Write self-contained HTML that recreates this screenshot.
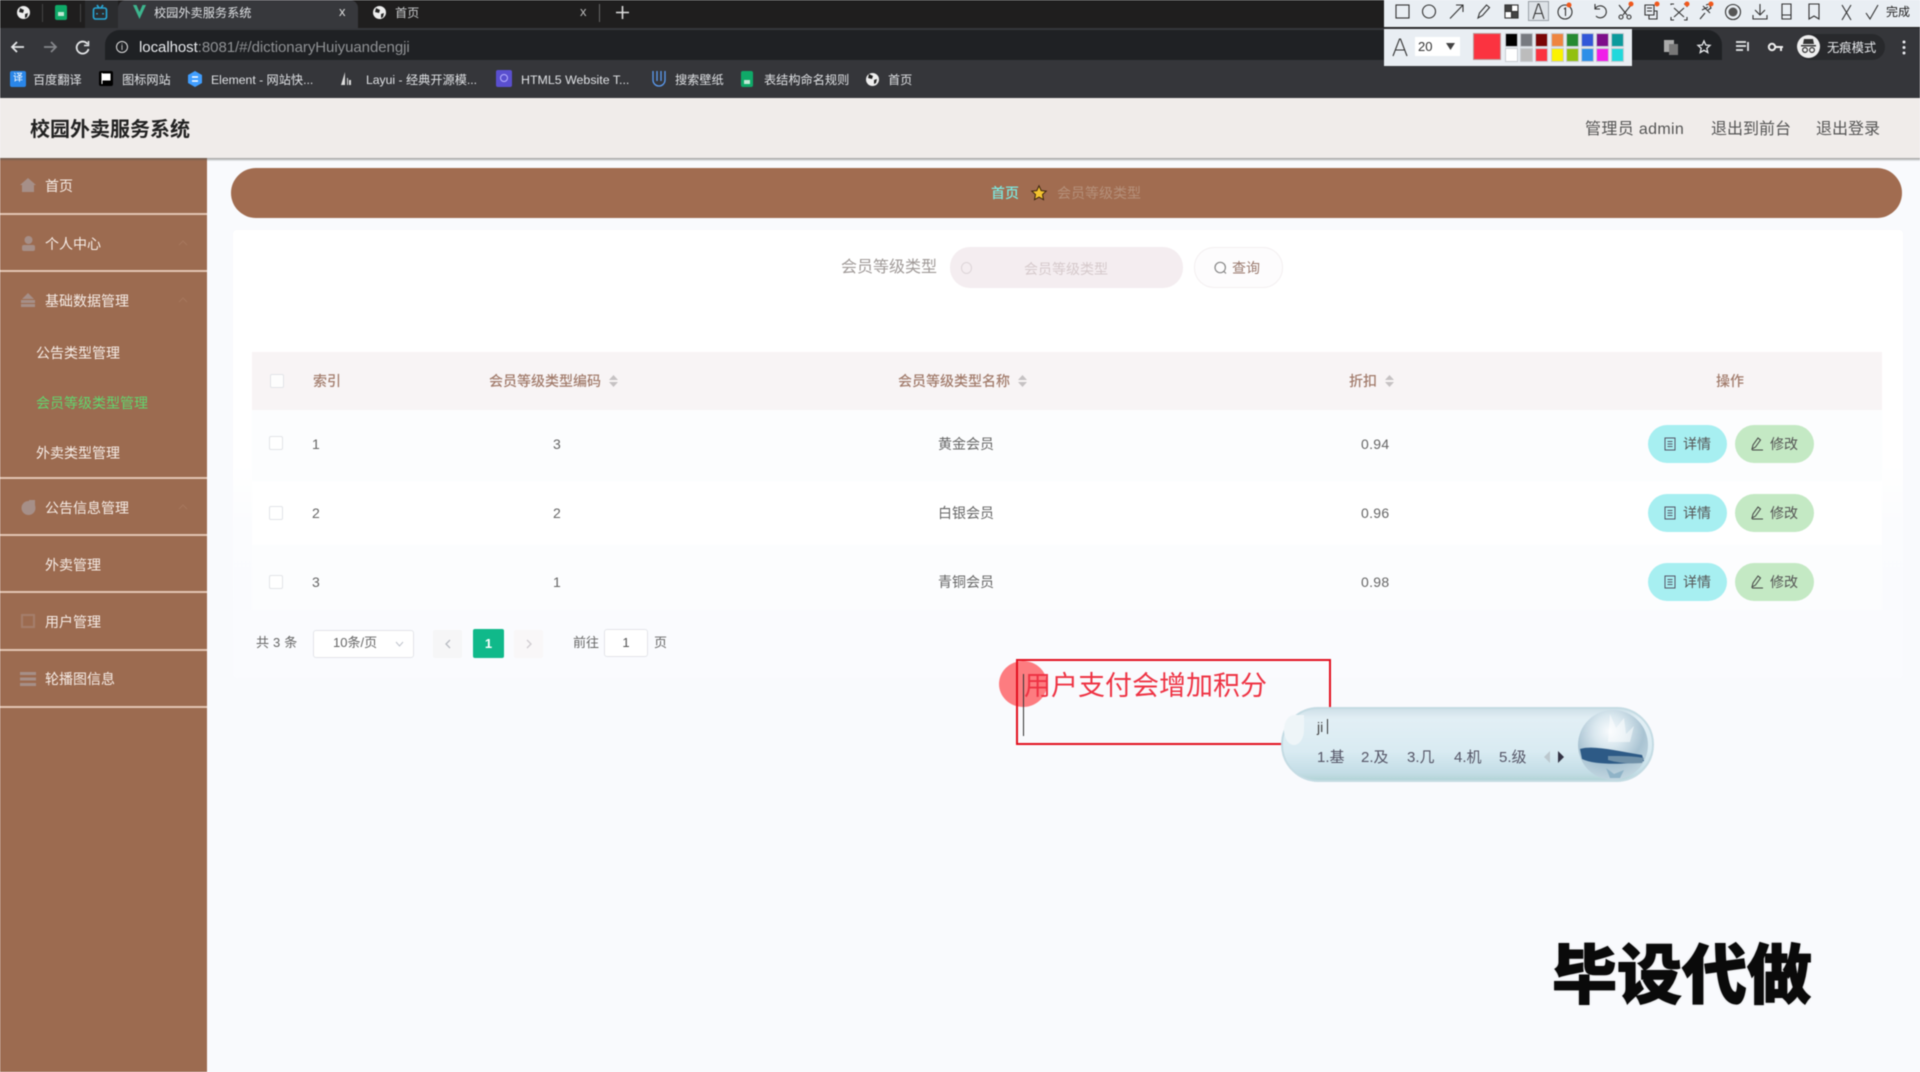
<!DOCTYPE html>
<html lang="zh"><head><meta charset="utf-8"><title>校园外卖服务系统</title>
<style>
html,body{margin:0;padding:0;width:1920px;height:1072px;overflow:hidden;background:#f9fafd}
body{font-family:"Liberation Sans","Noto Sans CJK SC",sans-serif}
#w{position:absolute;left:0;top:0;width:1920px;height:1072px;overflow:hidden;filter:blur(.55px)}
.a{position:absolute}
.t{position:absolute;white-space:nowrap;line-height:20px;height:20px}
.b{position:absolute;box-sizing:border-box}
svg{position:absolute;overflow:visible}
.side{color:#f6ece6;font-size:14px}
.dv{position:absolute;left:0;width:207px;height:1.5px;background:#e2c4b2}
.th{font-size:14px;color:#a27c6c;font-weight:500}
.td{font-size:14px;color:#666}
.bm{font-size:12px;color:#dfe1e4}
.sw{position:absolute;width:13px;height:14px;box-sizing:border-box;border:1px solid #c8ccd2}
.btn{position:absolute;width:79px;height:38px;border-radius:19px;font-size:14px;color:#555;line-height:38px;box-sizing:border-box;padding-left:35px}
.cb{position:absolute;left:269px;width:14px;height:14px;border:1px solid #e2e4e8;background:#fff;border-radius:2px;box-sizing:border-box}
</style></head><body><div id="w">

<!-- browser chrome -->
<div class="a" style="left:0;top:0;width:1920px;height:28px;background:#1f1e1e"></div>
<div class="a" style="left:118px;top:0;width:240px;height:28px;background:#37383c;border-radius:8px 8px 0 0"></div>
<div class="a" style="left:0;top:28px;width:1920px;height:32px;background:#35363a"></div>
<div class="a" style="left:105px;top:30px;width:1617px;height:30px;background:#1f2124;border-radius:15px 15px 0 0"></div>
<div class="a" style="left:0;top:60px;width:1920px;height:38px;background:#35363a"></div>

<!-- tab icons -->
<div class="a" style="left:17px;top:6px;width:13px;height:13px;border-radius:50%;background:#eee"></div>
<svg style="left:17px;top:6px" width="13" height="13"><path d="M3 2l4 2-1 3-4-1zM8 8l3-1-1 4-2 1z" fill="#222"/></svg>
<div class="a" style="left:85px;top:0;width:33px;height:28px;background:#2b2c2e"></div>
<div class="a" style="left:42px;top:4px;width:1px;height:18px;background:#444"></div>
<div class="a" style="left:80px;top:4px;width:1px;height:18px;background:#444"></div>
<div class="a" style="left:55px;top:5px;width:12px;height:15px;background:#0fa968;border-radius:2px"></div>
<div class="a" style="left:58px;top:12px;width:6px;height:4px;background:#bfe8d4"></div>
<svg style="left:92px;top:4px" width="16" height="17" fill="none" stroke="#29a7d6" stroke-width="1.6"><rect x="1.5" y="4" width="13" height="11" rx="2"/><path d="M5 1l2 3M11 1l-2 3M5 9v1.5M11 9v1.5"/></svg>
<svg style="left:132px;top:4px" width="15" height="16"><path d="M1 1l6.500 14L14 1h-3.500L7.500 8 4.500 1z" fill="#3db58e"/></svg>
<div class="t" style="left:154px;top:3px;font-size:12.200px;color:#dfe1e4">校园外卖服务系统</div>
<div class="t" style="left:339px;top:2px;font-size:13px;color:#ddd">x</div>
<div class="a" style="left:373px;top:6px;width:13px;height:13px;border-radius:50%;background:#eee"></div>
<svg style="left:373px;top:6px" width="13" height="13"><path d="M3 2l4 2-1 3-4-1zM8 8l3-1-1 4-2 1z" fill="#222"/></svg>
<div class="t" style="left:395px;top:3px;font-size:12.200px;color:#c8cacc">首页</div>
<div class="t" style="left:580px;top:2px;font-size:13px;color:#bbb">x</div>
<div class="a" style="left:599px;top:4px;width:1px;height:18px;background:#666"></div>
<svg style="left:616px;top:6px" width="13" height="13" stroke="#ddd" stroke-width="1.600"><path d="M6.500 0v13M0 6.500h13"/></svg>

<!-- nav icons -->
<svg style="left:10px;top:40px" width="15" height="14" fill="none" stroke="#e4e6e8" stroke-width="1.800"><path d="M14 7H2M7 2L2 7l5 5"/></svg>
<svg style="left:43px;top:40px" width="15" height="14" fill="none" stroke="#84868a" stroke-width="1.800"><path d="M1 7h12M8 2l5 5-5 5"/></svg>
<svg style="left:75px;top:40px" width="15" height="15" fill="none" stroke="#e4e6e8" stroke-width="1.800"><path d="M12.500 4A6 6 0 1 0 13.500 9"/><path d="M13.500 1v4.500H9" stroke-width="1.500"/></svg>
<div class="a" style="left:116px;top:41px;width:12px;height:12px;border:1.300px solid #ddd;border-radius:50%;box-sizing:border-box;color:#ddd;font-size:9px;line-height:10px;text-align:center">i</div>
<div class="t" style="left:139px;top:38px;font-size:15px;color:#8f9194;letter-spacing:-.05px"><span style="color:#e8eaed">localhost</span>:8081/#/dictionaryHuiyuandengji</div>

<!-- bookmarks -->
<div class="a" style="left:10px;top:71px;width:16px;height:16px;background:#2a86e8;border-radius:2px;color:#fff;font-size:10px;line-height:16px;text-align:center">译</div>
<div class="t bm" style="left:33px;top:70px;font-size:12.200px">百度翻译</div>
<div class="a" style="left:99px;top:71px;width:14px;height:15px;background:#000;border-radius:2px"></div>
<svg style="left:101px;top:73px" width="10" height="11"><path d="M1 0v11M1 1h8v6H1" fill="#fff" stroke="#fff"/></svg>
<div class="t bm" style="left:122px;top:70px;font-size:12.200px">图标网站</div>
<svg style="left:188px;top:71px" width="14" height="16"><path d="M7 0l7 4v8l-7 4-7-4V4z" fill="#409eff"/><path d="M4 6h6M4 10h6" stroke="#fff" stroke-width="1.500"/></svg>
<div class="t bm" style="left:211px;top:70px;font-size:12.200px">Element - 网站快...</div>
<svg style="left:340px;top:72px" width="12" height="14"><path d="M5 0v13H1zM8 6v7H7V6zM11 8v5h-2V8z" fill="#ddd"/></svg>
<div class="t bm" style="left:366px;top:70px;font-size:12.200px">Layui - 经典开源模...</div>
<div class="a" style="left:496px;top:70px;width:16px;height:17px;background:#5a4fcf;border-radius:2px"></div>
<div class="a" style="left:500px;top:74px;width:8px;height:8px;border:1px solid #b7b0ff;border-radius:50%;box-sizing:border-box"></div>
<div class="t bm" style="left:521px;top:70px;font-size:12.400px">HTML5 Website T...</div>
<svg style="left:652px;top:71px" width="14" height="15" fill="none" stroke="#5b9bf0" stroke-width="1.300"><path d="M1 0v9a6 6 0 0 0 12 0V0M5 0v10M9 0v10"/></svg>
<div class="t bm" style="left:675px;top:70px;font-size:12.200px">搜索壁纸</div>
<div class="a" style="left:741px;top:71px;width:12px;height:16px;background:#0fa968;border-radius:2px"></div>
<div class="a" style="left:744px;top:80px;width:6px;height:4px;background:#bfe8d4"></div>
<div class="t bm" style="left:764px;top:70px;font-size:12.200px">表结构命名规则</div>
<div class="a" style="left:866px;top:73px;width:13px;height:13px;border-radius:50%;background:#eee"></div>
<svg style="left:866px;top:72px" width="13" height="13"><path d="M3 2l4 2-1 3-4-1zM8 8l3-1-1 4-2 1z" fill="#222"/></svg>
<div class="t bm" style="left:888px;top:70px;font-size:12.200px">首页</div>

<!-- right chrome -->
<svg style="left:1664px;top:40px" width="14" height="15"><rect x="0" y="0" width="10" height="12" fill="#aaa"/><rect x="5" y="4" width="9" height="11" fill="#777"/></svg>
<svg style="left:1697px;top:40px" width="14" height="14" fill="none" stroke="#e8eaed" stroke-width="1.300"><path d="M7 1l1.800 4 4.200.4-3.200 2.800 1 4.300L7 10.300 3.200 12.500l1-4.300L1 5.400 5.200 5z"/></svg>
<svg style="left:1736px;top:40px" width="15" height="14" stroke="#e8eaed" stroke-width="1.700" fill="none"><path d="M0 2h10M0 6h10M0 10h7M12 2v9"/></svg>
<svg style="left:1768px;top:42px" width="15" height="10"><circle cx="4" cy="5" r="3.200" fill="none" stroke="#eee" stroke-width="2"/><path d="M7 4h8v2h-1v3h-2V6H7z" fill="#eee"/></svg>
<div class="a" style="left:1797px;top:34px;width:88px;height:26px;border-radius:13px;background:#28292c"></div>
<div class="a" style="left:1797px;top:35px;width:23px;height:23px;border-radius:50%;background:#eee"></div>
<svg style="left:1800px;top:39px" width="17" height="15" fill="#333"><path d="M4 0h9l1 5H3z"/><rect x="1" y="6" width="15" height="1.500"/><circle cx="5" cy="11" r="2.400" fill="none" stroke="#333" stroke-width="1.200"/><circle cx="12" cy="11" r="2.400" fill="none" stroke="#333" stroke-width="1.200"/></svg>
<div class="t" style="left:1827px;top:38px;font-size:12.300px;color:#e8eaed">无痕模式</div>
<svg style="left:1902px;top:40px" width="4" height="15" fill="#e8eaed"><circle cx="2" cy="2" r="1.500"/><circle cx="2" cy="7.500" r="1.500"/><circle cx="2" cy="13" r="1.500"/></svg>

<!-- screenshot toolbar -->
<div class="a" style="left:1384px;top:0;width:536px;height:27px;background:#e9eef3"></div>
<div class="a" style="left:1384px;top:29px;width:248px;height:37px;background:#e9eef3"></div>
<div class="a" style="left:1528px;top:1px;width:21px;height:20px;border:1px solid #9aa0a6;background:#dde2e7;box-sizing:border-box"></div>
<svg style="left:1384px;top:0" width="536" height="27" fill="none" stroke="#333" stroke-width="1.100">
<rect x="12" y="5" width="13" height="13"/>
<circle cx="45" cy="11.500" r="6.500"/>
<path d="M66 18.500L79 5M72 5h7v7"/>
<path d="M94 18l1.500-5 7-8 3 2.500-7 8z"/>
<rect x="121" y="5" width="13" height="13" fill="#fff"/><rect x="121" y="5" width="6.500" height="6.500" fill="#444"/><rect x="127.500" y="11.500" width="6.500" height="6.500" fill="#444"/>
<path d="M149 19l5-15h1l5 15M151 13.500h7"/>
<circle cx="181" cy="12" r="7"/><path d="M180 9l1.500-1v8"/>
<path d="M211 9a6 6 0 1 1 1 7M211 4v5h5"/>
<path d="M235 5l8 10M247 5l-8 10"/><circle cx="237" cy="17" r="2"/><circle cx="245" cy="17" r="2"/>
<path d="M261 5h9v10h-9zM263 8h5M263 11h5M265 15v4h8v-8h-3"/>
<path d="M287 5v-1h3M300 4h3v3M287 17v3h3M300 20h3v-3M290 8l10 9M300 8l-10 9"/>
<path d="M316 19l5-6M319 6l7 7M322 5l3-1 2 4-3 2M318 10l6-3"/>
<circle cx="349" cy="12" r="7.500"/><circle cx="349" cy="12" r="4.500" fill="#555" stroke="none"/>
<path d="M376 4v10M371 10l5 5 5-5M369 15v4h14v-4"/>
<path d="M398 4h9v15h-9zM398 15h9"/>
<path d="M425 4h10v15l-5-3-5 3z"/>
<path d="M458 5l9 15M467 5l-9 15"/>
<path d="M482 13l4 6 8-14"/>
</svg>
<svg style="left:1384px;top:0" width="536" height="27" fill="#f0581c"><circle cx="185" cy="5" r="2.500"/><circle cx="247" cy="4" r="2.500"/><circle cx="273" cy="4" r="2.500"/><circle cx="303" cy="4" r="2.500"/><circle cx="327" cy="4" r="2.500"/></svg>
<div class="t" style="left:1886px;top:2px;font-size:12px;color:#222">完成</div>

<svg style="left:1392px;top:38px" width="16" height="19" fill="none" stroke="#333" stroke-width="1.100"><path d="M1 18L7.500 1h1L15 18M3.500 12h9"/></svg>
<div class="a" style="left:1415px;top:37px;width:45px;height:19px;background:#fff"></div>
<div class="t" style="left:1418px;top:37px;font-size:13px;color:#333">20</div>
<svg style="left:1446px;top:43px" width="9" height="7"><path d="M0 0h9L4.500 7z" fill="#444"/></svg>
<div class="a" style="left:1473px;top:33px;width:28px;height:27px;background:#fb3340;border:1px solid #b99;box-sizing:border-box"></div>
<div class="sw" style="left:1505px;top:33px;background:#000"></div><div class="sw" style="left:1520px;top:33px;background:#777a80"></div><div class="sw" style="left:1535px;top:33px;background:#7a0505"></div><div class="sw" style="left:1551px;top:33px;background:#ee8540"></div><div class="sw" style="left:1566px;top:33px;background:#268a32"></div><div class="sw" style="left:1581px;top:33px;background:#3257d8"></div><div class="sw" style="left:1596px;top:33px;background:#7d0e8a"></div><div class="sw" style="left:1611px;top:33px;background:#0c9a9c"></div>
<div class="sw" style="left:1505px;top:48px;background:#fff"></div><div class="sw" style="left:1520px;top:48px;background:#bcbcbc"></div><div class="sw" style="left:1535px;top:48px;background:#fb3340"></div><div class="sw" style="left:1551px;top:48px;background:#fbf200"></div><div class="sw" style="left:1566px;top:48px;background:#92c010"></div><div class="sw" style="left:1581px;top:48px;background:#2c8fe8"></div><div class="sw" style="left:1596px;top:48px;background:#f01ee8"></div><div class="sw" style="left:1611px;top:48px;background:#20d8dc"></div>

<!-- app header -->
<div class="a" style="left:0;top:98px;width:1920px;height:60px;background:#f0ecea"></div>
<div class="a" style="left:0;top:158px;width:1920px;height:3px;background:linear-gradient(#9c9a99,#eef0f4)"></div>
<div class="t" style="left:30px;top:120px;font-size:20px;font-weight:700;color:#222">校园外卖服务系统</div>
<div class="t" style="left:1585px;top:120px;font-size:16px;color:#555;letter-spacing:.35px">管理员 admin</div>
<div class="t" style="left:1711px;top:120px;font-size:16px;color:#555">退出到前台</div>
<div class="t" style="left:1816px;top:120px;font-size:16px;color:#555">退出登录</div>

<!-- sidebar -->
<div class="a" style="left:0;top:158px;width:207px;height:914px;background:#9c6b50"></div>
<div class="a" style="left:0;top:158px;width:207px;height:3px;background:linear-gradient(#6b5a50,#9c6b50)"></div>
<div class="dv" style="top:213px"></div><div class="dv" style="top:270px"></div><div class="dv" style="top:477px"></div><div class="dv" style="top:534px"></div><div class="dv" style="top:591px"></div><div class="dv" style="top:649px"></div><div class="dv" style="top:706px"></div>
<div class="t side" style="left:45px;top:176px">首页</div>
<div class="t side" style="left:45px;top:234px">个人中心</div>
<div class="t side" style="left:45px;top:291px">基础数据管理</div>
<div class="t side" style="left:36px;top:343px">公告类型管理</div>
<div class="t side" style="left:36px;top:393px;color:#62d56e">会员等级类型管理</div>
<div class="t side" style="left:36px;top:443px">外卖类型管理</div>
<div class="t side" style="left:45px;top:498px">公告信息管理</div>
<div class="t side" style="left:45px;top:555px">外卖管理</div>
<div class="t side" style="left:45px;top:612px">用户管理</div>
<div class="t side" style="left:45px;top:669px">轮播图信息</div>
<svg style="left:20px;top:178px" width="16" height="14" fill="#a68f88"><path d="M8 0l8 7h-2v7H2V7H0z"/></svg>
<svg style="left:21px;top:236px" width="15" height="15" fill="#a68f88"><circle cx="7.500" cy="4" r="4"/><rect x="1" y="9" width="13" height="6" rx="2"/></svg>
<svg style="left:20px;top:293px" width="16" height="14" fill="#a68f88"><path d="M8 0l6 6H2zM1 7h14v3H1zM1 11h14v3H1z"/></svg>
<svg style="left:21px;top:500px" width="15" height="15" fill="#a68f88"><circle cx="7.500" cy="8" r="7"/><path d="M8 0h6v6H8z"/></svg>
<svg style="left:21px;top:614px" width="14" height="14" fill="none" stroke="#a57f6b" stroke-width="2"><rect x="1" y="1" width="12" height="12"/></svg>
<svg style="left:20px;top:672px" width="16" height="14" fill="#a68f88"><rect width="16" height="3"/><rect y="5.500" width="16" height="3"/><rect y="11" width="16" height="3"/></svg>
<svg style="left:178px;top:240px" width="10" height="6" fill="none" stroke="#a6775d"><path d="M1 5l4-4 4 4"/></svg>
<svg style="left:178px;top:297px" width="10" height="6" fill="none" stroke="#a6775d"><path d="M1 5l4-4 4 4"/></svg>
<svg style="left:178px;top:504px" width="10" height="6" fill="none" stroke="#a6775d"><path d="M1 5l4-4 4 4"/></svg>

<!-- breadcrumb -->
<div class="a" style="left:231px;top:168px;width:1671px;height:50px;border-radius:25px;background:#a16c50"></div>
<div class="t" style="left:991px;top:183px;font-size:14px;font-weight:500;color:#7de8df">首页</div>
<svg style="left:1031px;top:185px" width="16" height="16"><path d="M8 .8l2.200 4.800 5 .5-3.700 3.400 1 5.200L8 12.100 3.500 14.700l1-5.200L.8 6.100l5-.5z" fill="#f4c430" stroke="#3a2410" stroke-width="1"/></svg>
<div class="t" style="left:1057px;top:183px;font-size:14px;color:#b5907a">会员等级类型</div>

<!-- panel -->
<div class="a" style="left:233px;top:230px;width:1670px;height:448px;background:linear-gradient(#fff 0,#fff 235px,#fbfcfe 300px,#fafbfe 100%);border-radius:4px"></div>
<div class="t" style="left:841px;top:258px;font-size:16px;color:#a09a98">会员等级类型</div>
<div class="a" style="left:950px;top:247px;width:233px;height:41px;border-radius:20px;background:#f4edf0"></div>
<div class="a" style="left:961px;top:262px;width:11px;height:12px;border:1px solid #ddd5d8;border-radius:50%;box-sizing:border-box"></div>
<div class="t" style="left:1024px;top:259px;font-size:14px;color:#d6cacc">会员等级类型</div>
<div class="a" style="left:1194px;top:247px;width:89px;height:41px;border-radius:20px;background:#fdfcfd;border:1px solid #f3eff0;box-sizing:border-box"></div>
<svg style="left:1214px;top:261px" width="13" height="14" fill="none" stroke="#888" stroke-width="1.200"><circle cx="6.200" cy="6.500" r="5.200"/><path d="M10 10.500l2 2"/></svg>
<div class="t" style="left:1232px;top:258px;font-size:14px;color:#9a7a6e">查询</div>

<!-- table -->
<div class="a" style="left:252px;top:352px;width:1630px;height:58px;background:#f8f4f5"></div>
<div class="a" style="left:252px;top:410px;width:1630px;height:200px;background:#fcfdfe"></div>
<div class="a" style="left:252px;top:481px;width:1630px;height:64px;background:#fff"></div>
<div class="cb" style="left:270px;top:374px;background:#fdfdfd"></div>
<div class="t th" style="left:313px;top:371px;font-size:14px">索引</div>
<div class="t th" style="left:489px;top:371px">会员等级类型编码</div>
<div class="t th" style="left:898px;top:371px">会员等级类型名称</div>
<div class="t th" style="left:1349px;top:371px">折扣</div>
<div class="t th" style="left:1716px;top:371px">操作</div>
<svg style="left:609px;top:375px" width="9" height="12" fill="#c6c2c3"><path d="M4.500 0L9 5H0zM4.500 12L0 7h9z"/></svg>
<svg style="left:1018px;top:375px" width="9" height="12" fill="#c6c2c3"><path d="M4.500 0L9 5H0zM4.500 12L0 7h9z"/></svg>
<svg style="left:1385px;top:375px" width="9" height="12" fill="#c6c2c3"><path d="M4.500 0L9 5H0zM4.500 12L0 7h9z"/></svg>

<div class="cb" style="top:436px"></div><div class="cb" style="top:506px"></div><div class="cb" style="top:575px"></div>
<div class="t td" style="left:312px;top:434px">1</div><div class="t td" style="left:553px;top:434px">3</div><div class="t td" style="left:938px;top:434px">黄金会员</div><div class="t td" style="left:1361px;top:434px;letter-spacing:.3px">0.94</div>
<div class="t td" style="left:312px;top:503px">2</div><div class="t td" style="left:553px;top:503px">2</div><div class="t td" style="left:938px;top:503px">白银会员</div><div class="t td" style="left:1361px;top:503px;letter-spacing:.3px">0.96</div>
<div class="t td" style="left:312px;top:572px">3</div><div class="t td" style="left:553px;top:572px">1</div><div class="t td" style="left:938px;top:572px">青铜会员</div><div class="t td" style="left:1361px;top:572px;letter-spacing:.3px">0.98</div>

<div class="btn" style="left:1648px;top:425px;background:#a7eff1">详情</div><div class="btn" style="left:1735px;top:425px;background:#c4e9c4">修改</div>
<div class="btn" style="left:1648px;top:494px;background:#a7eff1">详情</div><div class="btn" style="left:1735px;top:494px;background:#c4e9c4">修改</div>
<div class="btn" style="left:1648px;top:563px;background:#a7eff1">详情</div><div class="btn" style="left:1735px;top:563px;background:#c4e9c4">修改</div>
<svg style="left:1664px;top:437px" width="12" height="14" fill="none" stroke="#556" stroke-width="1"><rect x="1" y="1" width="10" height="12"/><path d="M3.500 4.500h5M3.500 7h5M3.500 9.500h5"/></svg>
<svg style="left:1664px;top:506px" width="12" height="14" fill="none" stroke="#556" stroke-width="1"><rect x="1" y="1" width="10" height="12"/><path d="M3.500 4.500h5M3.500 7h5M3.500 9.500h5"/></svg>
<svg style="left:1664px;top:575px" width="12" height="14" fill="none" stroke="#556" stroke-width="1"><rect x="1" y="1" width="10" height="12"/><path d="M3.500 4.500h5M3.500 7h5M3.500 9.500h5"/></svg>
<svg style="left:1751px;top:437px" width="13" height="14" fill="none" stroke="#444" stroke-width="1"><path d="M1 12l1-4 5-7 2.500 2-5 7zM1 13h11"/></svg>
<svg style="left:1751px;top:506px" width="13" height="14" fill="none" stroke="#444" stroke-width="1"><path d="M1 12l1-4 5-7 2.500 2-5 7zM1 13h11"/></svg>
<svg style="left:1751px;top:575px" width="13" height="14" fill="none" stroke="#444" stroke-width="1"><path d="M1 12l1-4 5-7 2.500 2-5 7zM1 13h11"/></svg>

<!-- pagination -->
<div class="t" style="left:256px;top:633px;font-size:13px;color:#666;letter-spacing:.2px">共 3 条</div>
<div class="a" style="left:313px;top:630px;width:101px;height:28px;background:#fff;border:1px solid #e3e5ea;border-radius:3px;box-sizing:border-box"></div>
<div class="t" style="left:333px;top:633px;font-size:13px;color:#666">10条/页</div>
<svg style="left:395px;top:641px" width="9" height="6" fill="none" stroke="#c0c4cc"><path d="M1 1l3.500 4L8 1"/></svg>
<div class="a" style="left:433px;top:630px;width:29px;height:28px;background:#f6f6f7;border-radius:2px"></div>
<svg style="left:445px;top:639px" width="6" height="10" fill="none" stroke="#b8bcc2" stroke-width="1.300"><path d="M5 1L1 5l4 4"/></svg>
<div class="a" style="left:473px;top:629px;width:31px;height:29px;background:#10b98a;border-radius:2px;color:#fff;font-size:13px;font-weight:700;line-height:29px;text-align:center">1</div>
<div class="a" style="left:514px;top:630px;width:29px;height:28px;background:#f9f7f8;border-radius:2px"></div>
<svg style="left:526px;top:639px" width="6" height="10" fill="none" stroke="#d0ccd0" stroke-width="1.300"><path d="M1 1l4 4-4 4"/></svg>
<div class="t" style="left:573px;top:633px;font-size:13px;color:#666">前往</div>
<div class="a" style="left:604px;top:629px;width:44px;height:28px;background:#fff;border:1px solid #e3e5ea;border-radius:3px;box-sizing:border-box;color:#555;font-size:13px;line-height:26px;text-align:center">1</div>
<div class="t" style="left:654px;top:633px;font-size:13px;color:#666">页</div>

<!-- annotation -->
<div class="a" style="left:999px;top:661px;width:48px;height:46px;border-radius:50%;background:#fd7c80"></div>
<div class="a" style="left:1016px;top:659px;width:315px;height:86px;border:2px solid #e2101f;box-sizing:border-box"></div>
<div class="t" style="left:1024px;top:671px;font-size:27px;line-height:30px;height:30px;color:#ee3344">用户支付会增加积分</div>
<div class="a" style="left:1023px;top:674px;width:1px;height:62px;background:#333"></div>

<!-- IME -->
<div class="a" style="left:1281px;top:707px;width:373px;height:75px;border-radius:38px;background:linear-gradient(#cfe1e9,#e2eff5 14%,#d9ebf2 60%,#c3dde6 90%,#b4d5d8);border:2px solid #c4dbe3;box-sizing:border-box"></div>
<div class="a" style="left:1284px;top:715px;width:20px;height:30px;border-radius:50% 0 50% 50%;background:#eef5f8"></div>
<div class="a" style="left:1578px;top:710px;width:70px;height:70px;border-radius:50%;background:radial-gradient(circle at 45% 30%,#f8fbfd 0,#dae8ef 25%,#a9c3d2 55%,#d6e6ec 100%)"></div>
<svg style="left:1578px;top:710px" width="70" height="70"><path d="M32 4l6 14 8-10 2 16 8-8-4 16H30z" fill="#fff" opacity=".5"/><path d="M2 39c14-4 36 2 62 6l2 6c-20 4-50 4-62-2z" fill="#2d5a86"/><path d="M30 46c14 0 26 0 36 2l-2 5c-12 1-24 0-34-3z" fill="#6f90a8"/><path d="M28 58l8 6 10-4-4 8H32z" fill="#8fb3c7"/></svg>
<div class="t" style="left:1317px;top:717px;font-size:14px;color:#444">ji</div>
<div class="a" style="left:1327px;top:719px;width:1px;height:15px;background:#333"></div>
<div class="t" style="left:1317px;top:748px;font-size:15px;color:#556">1.基</div>
<div class="t" style="left:1361px;top:748px;font-size:15px;color:#556">2.及</div>
<div class="t" style="left:1407px;top:748px;font-size:15px;color:#556">3.几</div>
<div class="t" style="left:1454px;top:748px;font-size:15px;color:#556">4.机</div>
<div class="t" style="left:1499px;top:748px;font-size:15px;color:#556">5.级</div>
<svg style="left:1544px;top:751px" width="20" height="12"><path d="M6 0v12L0 6z" fill="#bcc8ce"/><path d="M14 0v12l6-6z" fill="#334"/></svg>

<!-- watermark -->
<div class="t" style="left:1552px;top:932px;height:76px;line-height:76px;font-size:65px;font-weight:900;color:#0a0a0a;-webkit-text-stroke:1px #0a0a0a;font-family:'Noto Sans CJK SC','Liberation Sans',sans-serif;text-shadow:0 0 2px #aaa">毕设代做</div>

</div></body></html>
